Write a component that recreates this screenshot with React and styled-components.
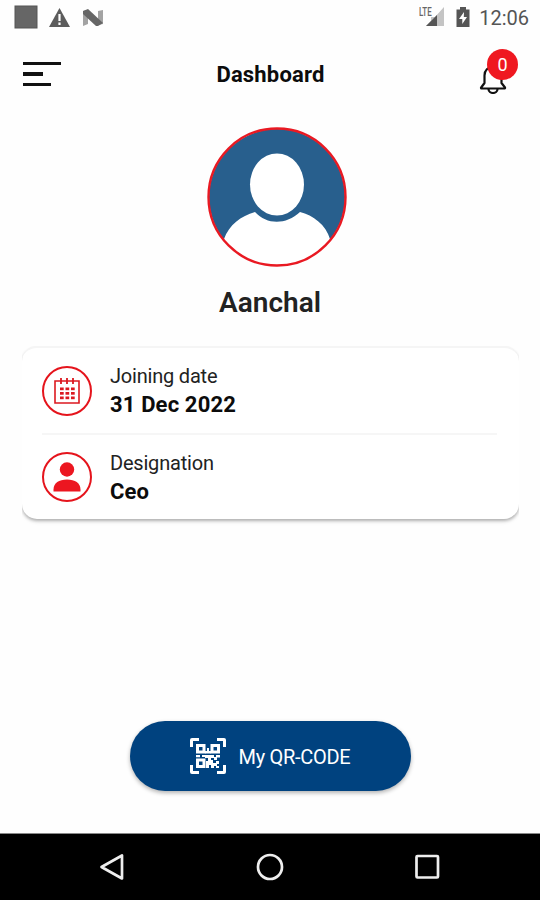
import React from 'react';
import styled, { createGlobalStyle } from 'styled-components';

const GlobalStyle = createGlobalStyle`
	* {
		box-sizing: border-box;
	}

	body {
		margin: 0;
		background: #fefefe;
		font-family: Roboto, "Liberation Sans", sans-serif;
		color: #0c0c0c;
	}
`;

const NotificationIcons = () => (
	<svg width="92" height="26" viewBox="0 0 92 26">
		<rect x="1" y="2" width="22" height="22" fill="#666" stroke="#555" />
		<path d="M45.500 4L56 23H35Z" fill="#5c5c5c" />
		<path d="M45.500 10V17M45.500 18.500V21" stroke="#fff" strokeWidth="2.200" />
		<path d="M69 7L74 6V20L69 22Z" fill="#a3a3a3" />
		<path d="M84 7L89 6V20L84 21Z" fill="#a3a3a3" />
		<path d="M69 7L74 5L89 19L84 22H82L69 10Z" fill="#666" />
	</svg>
);

const SignalIcon = () => (
	<svg width="18" height="20" viewBox="0 0 18 20">
		<path d="M18 0V19H0L5 14V10H9L18 0Z" fill="#c4c4c4" />
		<path d="M11 8V19H0Z" fill="#555" />
	</svg>
);

const BatteryIcon = () => (
	<svg width="14" height="20" viewBox="0 0 14 20">
		<path d="M4 0H10V2.500H13.500V20H.5V2.500H4Z" fill="#555" />
		<path d="M8 5L3 12H6.300V17L11 10H7.800Z" fill="#fff" />
	</svg>
);

const BellIcon = () => (
	<svg width="28" height="31" viewBox="0 0 28 31" fill="none" stroke="#111" strokeWidth="2.200" strokeLinejoin="round">
		<path d="M5.500 20V12.500C5.500 7 9 4 14 4S22.500 7 22.500 12.500V20L26 24.500Q26.500 25.500 25 25.500H3Q1.500 25.500 2.200 24.500Z" />
		<path d="M9.500 26C9.500 31.300 18.500 31.300 18.500 26" />
	</svg>
);

const AvatarPicture = () => (
	<svg width="140" height="140" viewBox="0 0 140 140">
		<defs>
			<clipPath id="avatar">
				<circle cx="70" cy="70" r="68" />
			</clipPath>
		</defs>
		<circle cx="70" cy="70" r="68" fill="#fff" />
		<g clipPath="url(#avatar)">
			<path d="M0 0H140V112H123C119 98 106 88 93 85C79 98 60 98 48 85C34 89 22 98 17 112H0Z" fill="#285f8d" />
			<ellipse cx="70" cy="57.500" rx="27" ry="31" fill="#fff" />
		</g>
		<circle cx="70" cy="70" r="68.500" fill="none" stroke="#e91922" strokeWidth="2.400" />
	</svg>
);

const CalendarIcon = () => (
	<svg width="26" height="27" viewBox="0 0 26 27" fill="#dc1920">
		<path d="M1 4H25V26H1Z" fill="none" stroke="#dc1920" strokeWidth="1.600" />
		<path d="M7 1V7M13 1V7M19 1V7" stroke="#dc1920" strokeWidth="1.800" />
		{[10.5, 15, 19.5].map((y) =>
			[6, 11.5, 17].map((x) => <rect key={`${x}-${y}`} x={x} y={y} width="3.700" height="2.700" />)
		)}
	</svg>
);

const PersonIcon = () => (
	<svg width="28" height="30" viewBox="0 0 28 30" fill="#ec1620">
		<circle cx="14" cy="7.500" r="7.200" />
		<path d="M.5 29.500V27.500C.5 21 6 17.500 14 17.500S27.500 21 27.500 27.500V29.500Z" />
	</svg>
);

const QrIcon = () => (
	<svg width="36" height="36" viewBox="0 0 36 36" fill="#fff">
		<path
			d="M1.500 9V2Q1.500 1.500 2 1.500H9M27 1.500H34Q34.500 1.500 34.500 2V9M34.500 27V34Q34.500 34.500 34 34.500H27M9 34.500H2Q1.500 34.500 1.500 34V27"
			fill="none"
			stroke="#fff"
			strokeWidth="3"
		/>
		<g fill="none" stroke="#fff" strokeWidth="3">
			<rect x="7.500" y="7.500" width="6.500" height="6.500" />
			<rect x="22" y="7.500" width="6.500" height="6.500" />
			<rect x="7.500" y="22" width="6.500" height="6.500" />
		</g>
		<path d="M17 10H19V13H21V15.500H15V13H17ZM6 17H10V19.200H6ZM12 17H24V19H26V17H30V19.500H27V22H24V20H21V22H23V25H26V23H29V26H27V28H29V30H26V28H24V30H21V27H19V30H16V23H18V20H15V19H12Z" />
	</svg>
);

const DETAILS = [
	{ label: 'Joining date', value: '31 Dec 2022', icon: <CalendarIcon /> },
	{ label: 'Designation', value: 'Ceo', icon: <PersonIcon /> },
];

export default function App() {
	return (
		<Screen>
			<GlobalStyle />

			<StatusBar>
				<NotificationIcons />
				<StatusRight>
					<Network>
						<SignalIcon />
						<Lte>LTE</Lte>
					</Network>
					<BatteryIcon />
					<Clock>12:06</Clock>
				</StatusRight>
			</StatusBar>

			<Header>
				<MenuButton aria-label="Menu">
					<MenuLine $width={38} />
					<MenuLine $width={20} />
					<MenuLine $width={28} />
				</MenuButton>
				<Title>Dashboard</Title>
				<BellButton aria-label="Notifications">
					<BellIcon />
					<Badge>0</Badge>
				</BellButton>
			</Header>

			<Profile>
				<Avatar>
					<AvatarPicture />
				</Avatar>
				<Name>Aanchal</Name>
			</Profile>

			<CardArea>
				<Card>
					{DETAILS.map((item) => (
						<DetailRow key={item.label}>
							<IconRing>{item.icon}</IconRing>
							<DetailText>
								<Label>{item.label}</Label>
								<Value>{item.value}</Value>
							</DetailText>
						</DetailRow>
					))}
				</Card>
			</CardArea>

			<Footer>
				<QrButton>
					<QrIcon />
					<span>My QR-CODE</span>
				</QrButton>
			</Footer>

			<NavBar>
				<svg width="26" height="28" viewBox="0 0 26 28" fill="none" stroke="#eee" strokeWidth="2.700" strokeLinejoin="round">
					<path d="M23 2.500V25.500L2.500 14Z" />
				</svg>
				<svg width="28" height="28" viewBox="0 0 28 28" fill="none" stroke="#eee" strokeWidth="2.700">
					<circle cx="14" cy="14" r="12" />
				</svg>
				<svg width="26" height="28" viewBox="0 0 26 28" fill="none" stroke="#eee" strokeWidth="2.700">
					<rect x="2.500" y="3" width="21.500" height="21.500" rx="1" />
				</svg>
			</NavBar>
		</Screen>
	);
}

const Screen = styled.div`
	display: flex;
	flex-direction: column;
	width: 540px;
	height: 900px;
	overflow: hidden;
`;

const StatusBar = styled.div`
	display: flex;
	justify-content: space-between;
	align-items: center;
	height: 36px;
	padding: 0 11px 2px 14px;
`;

const StatusRight = styled.div`
	display: flex;
	align-items: center;
`;

const Network = styled.div`
	position: relative;
	display: flex;
	margin-right: 12px;
`;

const Lte = styled.span`
	position: absolute;
	top: -2px;
	left: -7px;
	font-size: 12px;
	font-weight: 500;
	line-height: 14px;
	color: #666;
	transform: scaleX(0.66);
	transform-origin: left;
`;

const Clock = styled.span`
	margin-left: 9px;
	padding-top: 2px;
	font-size: 20px;
	line-height: 24px;
	color: #555;
`;

const Header = styled.header`
	display: grid;
	grid-template-columns: 80px 1fr 80px;
	align-items: center;
	height: 76px;
	padding: 0 33px 0 23px;
`;

const MenuButton = styled.button`
	display: flex;
	flex-direction: column;
	gap: 7px;
	padding: 0;
	border: none;
	background: none;
`;

const MenuLine = styled.span`
	width: ${(props) => props.$width}px;
	height: 3.6px;
	background: #111;
`;

const Title = styled.h1`
	margin: 0;
	padding: 1px 0 0 11px;
	font-size: 22px;
	font-weight: 700;
	line-height: 26px;
	letter-spacing: 0.18px;
	text-align: center;
`;

const BellButton = styled.button`
	position: relative;
	display: flex;
	justify-self: end;
	margin-top: 9px;
	padding: 0;
	border: none;
	background: none;
`;

const Badge = styled.span`
	position: absolute;
	top: -14px;
	left: 8px;
	display: flex;
	justify-content: center;
	align-items: center;
	width: 31px;
	height: 31px;
	border-radius: 50%;
	background: #ef1820;
	color: #fff;
	font-family: Roboto, sans-serif;
	font-size: 18px;
`;

const Profile = styled.section`
	display: flex;
	flex-direction: column;
	align-items: center;
	height: 234px;
	padding-top: 15px;
`;

const Avatar = styled.div`
	display: flex;
	margin-left: 14px;
`;

const Name = styled.h2`
	margin: 19px 0 0;
	font-size: 28px;
	font-weight: 600;
	line-height: 34px;
	color: #222;
`;

/* overflow cuts the card shadow off at the left and right edges */
const CardArea = styled.div`
	margin: 0 21px 0 22px;
	padding-bottom: 10px;
	overflow: hidden;
`;

const Card = styled.section`
	height: 173px;
	padding: 0 22px 0 20px;
	border-top: 2px solid #f5f5f5;
	border-radius: 15px;
	background: #fff;
	box-shadow: 0 2px 3px rgba(0, 0, 0, 0.24), 0 3px 4px rgba(0, 0, 0, 0.08);
`;

const DetailRow = styled.div`
	display: flex;
	align-items: center;
	height: 85px;
	gap: 18px;

	& + & {
		height: 86px;
		border-top: 2px solid #f6f6f6;
	}
`;

const IconRing = styled.div`
	display: flex;
	justify-content: center;
	align-items: center;
	width: 50px;
	height: 50px;
	border: 2.5px solid #e5141c;
	border-radius: 50%;
`;

const DetailText = styled.div`
	display: flex;
	flex-direction: column;
`;

const Label = styled.span`
	font-size: 20px;
	line-height: 28px;
	letter-spacing: -0.2px;
	color: #222;
`;

const Value = styled.strong`
	font-size: 22px;
	font-weight: 700;
	line-height: 29px;
	letter-spacing: 0.15px;
`;

const Footer = styled.div`
	display: flex;
	justify-content: center;
	align-items: flex-end;
	flex: 1;
	padding-bottom: 42px;
`;

const QrButton = styled.button`
	display: flex;
	justify-content: center;
	align-items: center;
	gap: 13px;
	width: 281px;
	height: 70px;
	padding: 0;
	border: none;
	border-radius: 35px;
	background: #00427f;
	box-shadow: 0 2px 4px rgba(0, 0, 0, 0.3);
	color: #fff;
	font-family: Roboto, "Liberation Sans", sans-serif;
	font-size: 20px;
	letter-spacing: -0.3px;

	span {
		padding-top: 2px;
	}
`;

const NavBar = styled.nav`
	display: flex;
	justify-content: space-between;
	align-items: center;
	height: 67px;
	padding: 0 100px 0 99px;
	border-top: 1px solid #888;
	background: #000;
`;
